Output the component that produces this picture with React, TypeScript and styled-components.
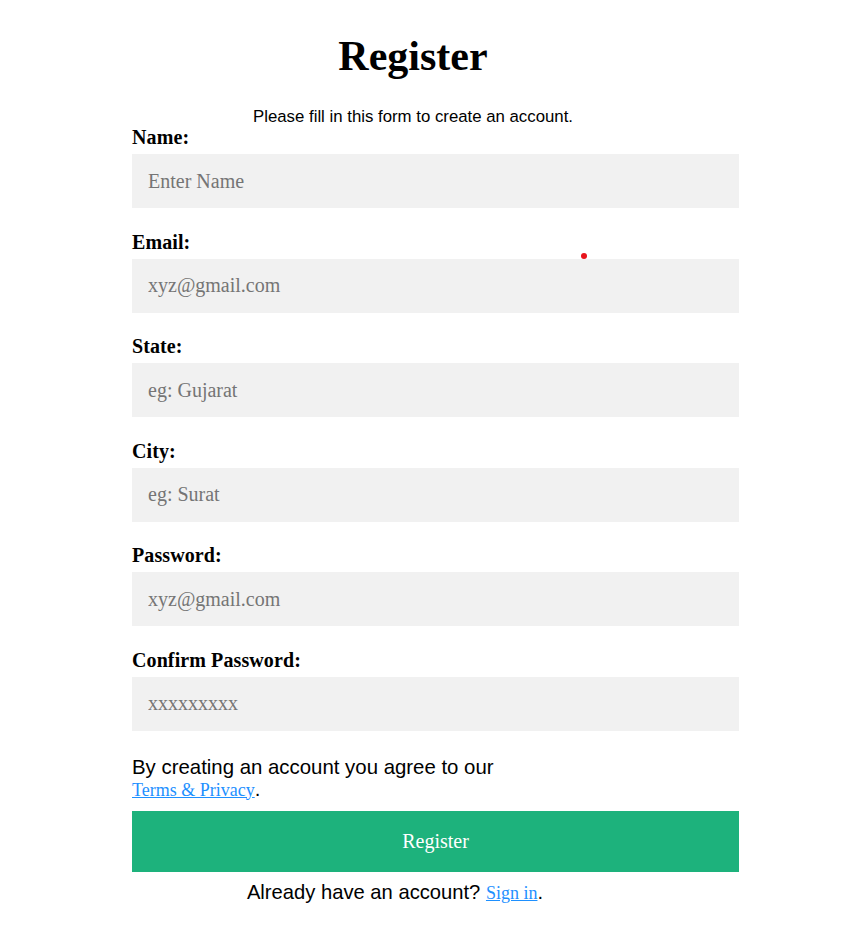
import React from "react";
import styled, { createGlobalStyle } from "styled-components";

const GlobalStyle = createGlobalStyle`
  html, body {
    margin: 0;
    padding: 0;
    background: #ffffff;
  }
  * { box-sizing: border-box; }
`;

const Page = styled.div`
  position: relative;
  width: 865px;
  min-height: 945px;
  padding: 32px 0 0 132px;
  font-family: "Liberation Serif", "Times New Roman", serif;
  color: #000;
`;

const Container = styled.form`
  width: 607px;
  display: flex;
  flex-direction: column;
`;

const Header = styled.div`
  width: 562px;
  text-align: center;
`;

const Title = styled.h1`
  margin: 0;
  font-family: "Liberation Serif", "Times New Roman", serif;
  font-weight: 700;
  font-size: 42px;
  line-height: 48px;
`;

const Subtitle = styled.p`
  margin: 27px 0 0;
  font-family: "Liberation Sans", Arial, sans-serif;
  font-size: 16.8px;
  line-height: 19px;
`;

const Label = styled.label`
  display: block;
  font-family: "Liberation Serif", "Times New Roman", serif;
  font-weight: 700;
  font-size: 20px;
  line-height: 23px;
  letter-spacing: 0.1px;
`;

const Input = styled.input`
  display: block;
  width: 100%;
  height: 54px;
  margin: 5px 0 22.6px;
  padding: 0 16px;
  border: none;
  outline: none;
  background: #f1f1f1;
  font-family: "Liberation Serif", "Times New Roman", serif;
  font-size: 20px;
  color: #000;
  &::placeholder {
    color: #757575;
  }
`;

const Terms = styled.p`
  margin: 2px 0 0;
  font-family: "Liberation Sans", Arial, sans-serif;
  font-size: 20.4px;
  line-height: 22px;
`;

const Link = styled.a<{ $size: number }>`
  font-family: "Liberation Serif", "Times New Roman", serif;
  font-size: ${(p) => p.$size}px;
  color: dodgerblue;
  text-decoration: underline;
`;

const SubmitButton = styled.button`
  display: block;
  width: 100%;
  height: 61px;
  margin: 10px 0 0;
  border: none;
  background: #1db27c;
  color: #ffffff;
  font-family: "Liberation Serif", "Times New Roman", serif;
  font-size: 20px;
  cursor: pointer;
`;

const Footer = styled.p`
  width: 526px;
  margin: 9px 0 0;
  text-align: center;
  font-family: "Liberation Sans", Arial, sans-serif;
  font-size: 20.2px;
  line-height: 23px;
`;

const Dot = styled.span`
  position: absolute;
  left: 581px;
  top: 253px;
  width: 6px;
  height: 6px;
  border-radius: 50%;
  background: #e8141c;
`;

const fields = [
  { id: "name", label: "Name:", placeholder: "Enter Name", type: "text" },
  { id: "email", label: "Email:", placeholder: "xyz@gmail.com", type: "text" },
  { id: "state", label: "State:", placeholder: "eg: Gujarat", type: "text" },
  { id: "city", label: "City:", placeholder: "eg: Surat", type: "text" },
  { id: "password", label: "Password:", placeholder: "xyz@gmail.com", type: "text" },
  { id: "confirm", label: "Confirm Password:", placeholder: "xxxxxxxxx", type: "text" },
];

export default function App() {
  return (
    <>
      <GlobalStyle />
      <Page>
        <Container onSubmit={(e) => e.preventDefault()}>
          <Header>
            <Title>Register</Title>
            <Subtitle>Please fill in this form to create an account.</Subtitle>
          </Header>
          {fields.map((f) => (
            <React.Fragment key={f.id}>
              <Label htmlFor={f.id}>{f.label}</Label>
              <Input id={f.id} type={f.type} placeholder={f.placeholder} />
            </React.Fragment>
          ))}
          <Terms>
            By creating an account you agree to our
            <br />
            <Link href="#" $size={18}>Terms &amp; Privacy</Link>.
          </Terms>
          <SubmitButton type="submit">Register</SubmitButton>
          <Footer>
            Already have an account? <Link href="#" $size={18}>Sign in</Link>.
          </Footer>
        </Container>
        <Dot />
      </Page>
    </>
  );
}
